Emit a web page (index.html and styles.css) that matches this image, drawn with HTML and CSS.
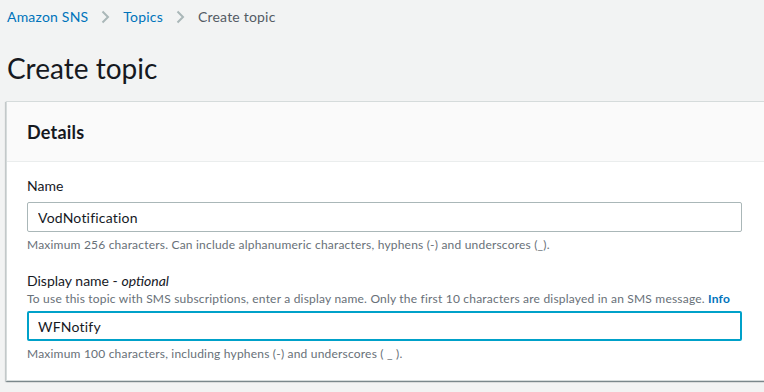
FILE: index.html
```html
<!DOCTYPE html>
<html lang="en">
<head>
  <meta charset="UTF-8" />
  <title>Create topic</title>
  <link rel="stylesheet" href="styles.css">
</head>
<body>
  <nav class="breadcrumbs">
    <a href="#">Amazon SNS</a>
    <svg class="crumb-sep" width="9" height="14" viewBox="0 0 9 14"><path d="M1.5 1.5 L7 7 L1.5 12.5" fill="none" stroke="#aab7b8" stroke-width="2"/></svg>
    <a href="#">Topics</a>
    <svg class="crumb-sep" width="9" height="14" viewBox="0 0 9 14"><path d="M1.5 1.5 L7 7 L1.5 12.5" fill="none" stroke="#aab7b8" stroke-width="2"/></svg>
    <span class="current">Create topic</span>
  </nav>

  <h1 class="page-title">Create topic</h1>

  <div class="panel">
    <div class="panel-header">
      <h2>Details</h2>
    </div>
    <div class="panel-body">
      <div class="field">
        <label class="label" for="topicName">Name</label>
        <input class="input" id="topicName" type="text" value="VodNotification">
        <p class="hint">Maximum 256 characters. Can include alphanumeric characters, hyphens (-) and underscores (_).</p>
      </div>
      <div class="field">
        <label class="label" for="displayName">Display name - <i>optional</i></label>
        <p class="desc">To use this topic with SMS subscriptions, enter a display name. Only the first 10 characters are displayed in an SMS message. <a href="#" class="info">Info</a></p>
        <input class="input focused" id="displayName" type="text" value="WFNotify">
        <p class="hint">Maximum 100 characters, including hyphens (-) and underscores ( _ ).</p>
      </div>
    </div>
  </div>
</body>
</html>
```
FILE: styles.css
```css
* {
  margin: 0;
  padding: 0;
  box-sizing: border-box;
}
html, body {
  width: 100%;
  height: 100%;
  overflow: hidden;
}
body {
  background: #f2f3f3;
  color: #16191f;
  font-family: 'Lato', 'Liberation Sans', sans-serif;
  font-size: 14px;
}

a {
  color: #0073bb;
  text-decoration: none;
}

.breadcrumbs {
  display: flex;
  align-items: center;
  height: 34px;
  padding: 0 0 0 7px;
  line-height: 20px;
  letter-spacing: 0.2px;
}
.crumb-sep {
  margin: 0 13px 0 13px;
}
.breadcrumbs .current {
  color: #545b64;
}

.page-title {
  font-size: 28px;
  font-weight: 400;
  line-height: 36px;
  height: 67px;
  padding: 16px 0 0 7px;
}

.panel {
  margin-left: 6px;
  margin-right: -20px;
  background: #fff;
  border: 1px solid #d5dbdb;
  border-right: none;
  box-shadow: 0 1px 1px 0 rgba(0, 28, 36, 0.3), 1px 1px 1px 0 rgba(0, 28, 36, 0.15), -1px 1px 1px 0 rgba(0, 28, 36, 0.15);
}

.panel-header {
  display: flex;
  align-items: center;
  height: 60px;
  padding: 0 20px;
  background: #fafafa;
  border-bottom: 1px solid #eaeded;
}
.panel-header h2 {
  font-size: 18px;
  font-weight: 700;
  line-height: 22px;
  letter-spacing: 0.2px;
}

.panel-body {
  padding: 14px 20px 18px;
}

.field + .field {
  margin-top: 18px;
}

.label {
  display: block;
  line-height: 20px;
}

.desc {
  font-size: 12px;
  line-height: 16px;
  letter-spacing: 0.2px;
  color: #687078;
}
.info {
  font-weight: 700;
}

.input {
  display: block;
  width: 715px;
  height: 30px;
  padding: 0 10px;
  border: 1px solid #aab7b8;
  border-radius: 2px;
  font: inherit;
  font-size: 14px;
  letter-spacing: 0.2px;
  color: #16191f;
  background: #fff;
  outline: none;
}
.label + .input {
  margin-top: 6px;
}
.desc + .input {
  margin-top: 4px;
}
.input.focused {
  border: 2px solid #00a1c9;
  padding: 0 9px;
}

.hint {
  margin-top: 5px;
  font-size: 12px;
  line-height: 16px;
  letter-spacing: 0.2px;
  color: #687078;
}
```
